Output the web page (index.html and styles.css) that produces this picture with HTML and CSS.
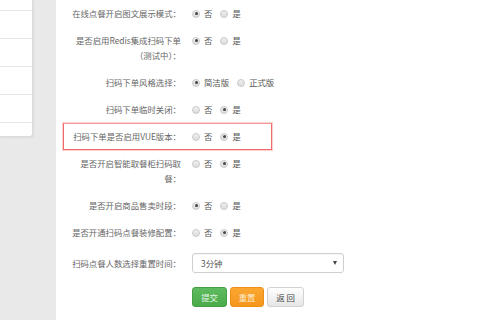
FILE: index.html
```html
<!DOCTYPE html>
<html lang="zh-CN">
<head>
<meta charset="utf-8">
<title>扫码点餐设置</title>
<link rel="stylesheet" href="styles.css">
</head>
<body>
<div class="page">
  <aside class="side">
    <div class="side-item first"></div>
    <div class="side-item"></div>
    <div class="side-item"></div>
    <div class="side-item"></div>
    <div class="side-item"></div>
    <div class="side-item last"></div>
  </aside>
  <main class="main">
    <form class="form">
      <div class="row">
        <label class="lbl">在线点餐开启图文展示模式：</label>
        <div class="ctl">
          <span class="opt"><i class="radio on"></i>否</span>
          <span class="opt"><i class="radio"></i>是</span>
        </div>
      </div>
      <div class="row">
        <label class="lbl">是否启用Redis集成扫码下单（测试中）：</label>
        <div class="ctl">
          <span class="opt"><i class="radio on"></i>否</span>
          <span class="opt"><i class="radio"></i>是</span>
        </div>
      </div>
      <div class="row">
        <label class="lbl">扫码下单风格选择：</label>
        <div class="ctl">
          <span class="opt"><i class="radio on"></i>简洁版</span>
          <span class="opt"><i class="radio"></i>正式版</span>
        </div>
      </div>
      <div class="row">
        <label class="lbl">扫码下单临时关闭：</label>
        <div class="ctl">
          <span class="opt"><i class="radio"></i>否</span>
          <span class="opt"><i class="radio on"></i>是</span>
        </div>
      </div>
      <div class="hl">
        <label class="lbl">扫码下单是否启用VUE版本：</label>
        <div class="ctl">
          <span class="opt"><i class="radio"></i>否</span>
          <span class="opt"><i class="radio on"></i>是</span>
        </div>
      </div>
      <div class="row">
        <label class="lbl">是否开启智能取餐柜扫码取餐：</label>
        <div class="ctl">
          <span class="opt"><i class="radio"></i>否</span>
          <span class="opt"><i class="radio on"></i>是</span>
        </div>
      </div>
      <div class="row">
        <label class="lbl">是否开启商品售卖时段：</label>
        <div class="ctl">
          <span class="opt"><i class="radio on"></i>否</span>
          <span class="opt"><i class="radio"></i>是</span>
        </div>
      </div>
      <div class="row">
        <label class="lbl">是否开通扫码点餐装修配置：</label>
        <div class="ctl">
          <span class="opt"><i class="radio"></i>否</span>
          <span class="opt"><i class="radio on"></i>是</span>
        </div>
      </div>
      <div class="row row-select">
        <label class="lbl">扫码点餐人数选择重置时间：</label>
        <div class="ctl">
          <div class="select"><span>3分钟</span><i class="caret"></i></div>
        </div>
      </div>
      <div class="row row-btns">
        <div class="lbl"></div>
        <div class="ctl btns">
          <button type="button" class="btn btn-green">提交</button>
          <button type="button" class="btn btn-orange">重置</button>
          <button type="button" class="btn btn-default">返 回</button>
        </div>
      </div>
    </form>
  </main>
</div>
</body>
</html>
```

FILE: styles.css
```css
html, body {
  margin: 0;
  padding: 0;
}
body {
  width: 488px;
  height: 320px;
  overflow: hidden;
  background: #e9e9e9;
  font-family: "Noto Sans CJK SC", "Noto Sans", sans-serif;
  font-size: 8.4px;
  color: #666;
}
.page {
  display: flex;
  height: 320px;
}
.side {
  width: 32px;
  height: 136px;
  background: #fff;
  border-right: 1px solid #dcdcdc;
  border-bottom: 1px solid #dcdcdc;
  border-radius: 0 0 3px 0;
  box-shadow: 1px 1px 2px rgba(0,0,0,0.06);
  display: flex;
  flex-direction: column;
  flex-shrink: 0;
}
.side-item {
  height: 28px;
  border-bottom: 1px solid #e6e6e6;
  box-sizing: border-box;
}
.side-item.first { height: 11px; }
.side-item.last { border-bottom: none; flex: 1; }
.main {
  margin-left: 23px;
  flex: 1;
  background: #fff;
  height: 320px;
}
.form {
  padding-left: 7px;
  display: flex;
  flex-direction: column;
}
.row, .hl {
  display: flex;
  align-items: flex-start;
  padding: 5px 0;
  border: 1px solid transparent;
  line-height: 15px;
  width: 207px;
}
.hl {
  border: 1px solid #f26a6a;
  border-top-color: #f59a9a;
  box-shadow: 0 0 0 1px rgba(246, 150, 150, 0.45);
}
.lbl {
  width: 110px;
  padding-left: 7px;
  text-align: right;
  flex-shrink: 0;
  color: #666;
}
.ctl {
  margin-left: 11px;
  display: flex;
  align-items: center;
  white-space: nowrap;
  height: 15px;
}
.opt {
  display: inline-flex;
  align-items: center;
  gap: 4px;
  margin-right: 8px;
  color: #555;
}
.radio {
  width: 8px;
  height: 8px;
  box-sizing: border-box;
  border-radius: 50%;
  border: 1px solid #c9c9c9;
  background: linear-gradient(#f0f0f0, #dcdcdc);
  display: inline-flex;
  align-items: center;
  justify-content: center;
}
.radio.on::after {
  content: "";
  width: 3px;
  height: 3px;
  border-radius: 50%;
  background: #444;
}
.row-select {
  align-items: center;
  padding: 6px 0;
  width: auto;
}
.row-select .ctl { height: 20px; }
.select {
  width: 152px;
  height: 20px;
  box-sizing: border-box;
  border: 1px solid #cfcfcf;
  border-radius: 3px;
  display: flex;
  align-items: center;
  justify-content: space-between;
  padding: 0 6px 0 8px;
  color: #555;
  box-shadow: inset 0 1px 1px rgba(0,0,0,0.04);
}
.caret {
  width: 0;
  height: 0;
  border-left: 2.5px solid transparent;
  border-right: 2.5px solid transparent;
  border-top: 4px solid #444;
}
.row-btns {
  padding: 6px 0;
  width: auto;
}
.row-btns .ctl { height: 20px; }
.btns { gap: 3px; }
.btn {
  height: 20px;
  padding: 0;
  border-radius: 3px;
  font-family: inherit;
  font-size: 8.4px;
  line-height: 18px;
  box-sizing: border-box;
  cursor: pointer;
}
.btn-green {
  width: 35px;
  color: #e8f5e8;
  background: linear-gradient(#5fbb5f, #4aab4a);
  border: 1px solid #45a045;
}
.btn-orange {
  width: 34px;
  color: #fdeccf;
  background: linear-gradient(#fba732, #f5961c);
  border: 1px solid #ee9018;
}
.btn-default {
  width: 37px;
  color: #444;
  background: linear-gradient(#ffffff, #e6e6e6);
  border: 1px solid #d2d2d2;
}
```
